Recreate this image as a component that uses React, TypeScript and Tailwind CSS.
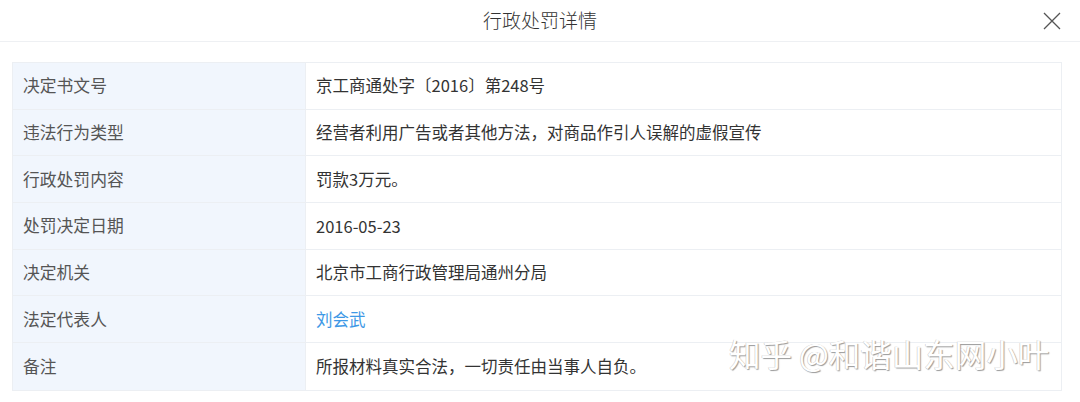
import React from "react";

const rows: { label: string; value: string; link?: boolean }[] = [
  { label: "决定书文号", value: "京工商通处字〔2016〕第248号" },
  { label: "违法行为类型", value: "经营者利用广告或者其他方法，对商品作引人误解的虚假宣传" },
  { label: "行政处罚内容", value: "罚款3万元。" },
  { label: "处罚决定日期", value: "2016-05-23" },
  { label: "决定机关", value: "北京市工商行政管理局通州分局" },
  { label: "法定代表人", value: "刘会武", link: true },
  { label: "备注", value: "所报材料真实合法，一切责任由当事人自负。" },
];

export default function App() {
  return (
    <div
      className="relative w-[1080px] h-[402px] bg-white overflow-hidden text-[#333]"
      style={{ fontFamily: '"Noto Sans CJK SC", "Noto Sans", sans-serif' }}
    >
      <div className="relative h-[42px] border-b border-[#eef0f3] flex items-center justify-center">
        <span className="text-[19px] text-[#333] font-light">行政处罚详情</span>
        <svg
          className="absolute right-[18px] top-[11px]"
          width="20"
          height="20"
          viewBox="0 0 20 20"
          fill="none"
          stroke="#555"
          strokeWidth="1.3"
        >
          <path d="M2 2 L18 18 M18 2 L2 18" />
        </svg>
      </div>
      <div className="pt-[20px] px-[12px] pr-[18px]">
        <div className="border border-[#eceff3]">
          {rows.map((r, i) => (
            <div
              key={r.label}
              className={`flex h-[46.7px] ${i < rows.length - 1 ? "border-b border-[#eceff3]" : ""}`}
            >
              <div className="w-[293px] shrink-0 bg-[#f1f6fd] border-r border-[#eceff3] flex items-center pl-[10px] text-[16.8px] text-[#555]">
                {r.label}
              </div>
              <div
                className={`flex-1 flex items-center pl-[10px] text-[16.5px] ${r.link ? "text-[#3d98e6]" : "text-[#333]"}`}
              >
                {r.value}
              </div>
            </div>
          ))}
        </div>
      </div>
      <div
        className="absolute left-[729px] top-[338px] text-[31.5px] text-white leading-none"
        style={{ textShadow: "1px 1px 1px #9a9a9a, -0.5px -0.5px 0 #c8c8c8" }}
      >
        知乎 @和谐山东网小叶
      </div>
    </div>
  );
}
